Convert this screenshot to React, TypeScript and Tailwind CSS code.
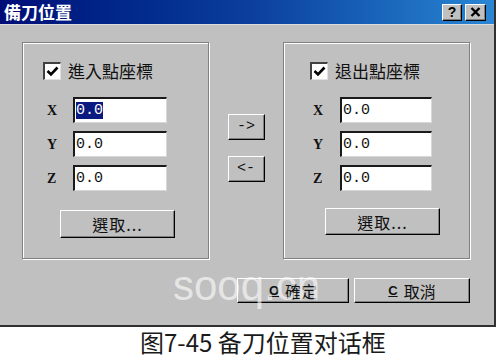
import { ReactNode } from 'react';

const CJK = { fontFamily: '"Noto Sans CJK TC", "Noto Sans", sans-serif' };

function Raised({ className, children }: { className: string; children?: ReactNode }) {
  return (
    <div
      className={`flex items-center justify-center bg-[#c0c0c0] border-t border-l border-t-white border-l-white border-r border-b border-r-black border-b-black shadow-[inset_-1px_-1px_0_#808080] ${className}`}
    >
      {children}
    </div>
  );
}

function CheckBox() {
  return (
    <div className="w-[18px] h-[18px] bg-white border-t-2 border-l-2 border-t-[#404040] border-l-[#404040] border-r border-b border-r-[#e0e0e0] border-b-[#e0e0e0] flex items-center justify-center">
      <svg width="13" height="11" viewBox="0 0 13 11">
        <path d="M1.5 5 L5 8.5 L11.5 1.5" fill="none" stroke="#000" strokeWidth="2.6" />
      </svg>
    </div>
  );
}

function Field({ axis, selected, labelW, inputW }: { axis: string; selected?: boolean; labelW: string; inputW: string }) {
  return (
    <div className="flex items-center h-[26px]">
      <span className={`${labelW} text-[14px] font-bold text-[#111]`} style={{ fontFamily: '"Liberation Serif", serif' }}>
        {axis}
      </span>
      <div
        className={`${inputW} h-[26px] bg-white border-t-2 border-l-2 border-t-[#1a1a1a] border-l-[#1a1a1a] border-r border-b border-r-[#d8d8d8] border-b-[#d8d8d8] flex items-center pl-[1px]`}
      >
        <span
          className={`text-[15px] leading-[17px] ${selected ? 'bg-[#0a1a80] text-white' : 'text-[#111]'}`}
          style={{ fontFamily: '"Liberation Mono", monospace' }}
        >
          0.0
        </span>
      </div>
    </div>
  );
}

function GroupBox({ title, side }: { title: string; side: 'left' | 'right' }) {
  const left = side === 'left';
  return (
    <div className="w-[187px] h-[217px] border border-[#808080] shadow-[inset_1px_1px_0_#fff,1px_1px_0_#fff] flex flex-col">
      <div className={`flex items-center gap-[7px] mt-[19px] ${left ? 'ml-[20px]' : 'ml-[26px]'}`}>
        <CheckBox />
        <span className="text-[17px] leading-[18px] text-[#111]" style={CJK}>
          {title}
        </span>
      </div>
      <div className={`flex flex-col gap-[8px] mt-[17px] ${left ? 'pl-[24px]' : 'pl-[29px]'}`}>
        {['X', 'Y', 'Z'].map((a, i) => (
          <Field
            key={a}
            axis={a}
            selected={left && i === 0}
            labelW={left ? 'w-[26px]' : 'w-[27px]'}
            inputW={left ? 'w-[94px]' : 'w-[92px]'}
          />
        ))}
      </div>
      <Raised className={`w-[115px] ${left ? 'h-[28px] mt-[19px] ml-[37px]' : 'h-[27px] mt-[17px] ml-[41px]'}`}>
        <span className="text-[16px] text-[#111] tracking-[1px]" style={CJK}>
          選取...
        </span>
      </Raised>
    </div>
  );
}

export default function App() {
  return (
    <div className="w-[498px] h-[359px] bg-white relative overflow-hidden">
      <div className="w-[496px] h-[327px] bg-[#c0c0c0] border-r-2 border-b-2 border-r-[#303030] border-b-[#303030] flex flex-col">
        <div className="h-[24px] bg-linear-to-r from-[#000c78] via-[#0c3e9c] to-[#2a86d4] flex items-center justify-between pl-[4px] pr-[8px]">
          <span className="text-white font-bold text-[17px] leading-[20px]" style={CJK}>
            備刀位置
          </span>
          <div className="flex gap-[3px]">
            <Raised className="w-[20px] h-[17px]">
              <span className="text-[14px] font-bold leading-none text-black" style={{ fontFamily: '"Liberation Sans", sans-serif' }}>
                ?
              </span>
            </Raised>
            <Raised className="w-[21px] h-[17px]">
              <svg width="11" height="10" viewBox="0 0 11 10">
                <path d="M1.5 1 L9.5 9 M9.5 1 L1.5 9" stroke="#000" strokeWidth="2.4" />
              </svg>
            </Raised>
          </div>
        </div>
        <div className="h-[1px] bg-[#dcdcdc]" />
        <div className="flex mt-[17px] pl-[22px]">
          <GroupBox title="進入點座標" side="left" />
          <div className="w-[74px] flex flex-col items-center pt-[72px] gap-[16px]">
            <Raised className="w-[37px] h-[26px]">
              <span className="text-[15px] text-[#111]" style={{ fontFamily: '"Liberation Mono", monospace' }}>
                -&gt;
              </span>
            </Raised>
            <Raised className="w-[37px] h-[26px]">
              <span className="text-[15px] text-[#111]" style={{ fontFamily: '"Liberation Mono", monospace' }}>
                &lt;-
              </span>
            </Raised>
          </div>
          <GroupBox title="退出點座標" side="right" />
        </div>
        <div className="flex justify-end gap-[5px] mt-[19px] pr-[24px]">
          <Raised className="w-[112px] h-[25px] gap-[6px]">
            <span className="text-[13px] font-bold underline text-[#111]" style={{ fontFamily: '"Liberation Sans", sans-serif' }}>
              O
            </span>
            <span className="text-[16px] text-[#111]" style={CJK}>
              確定
            </span>
          </Raised>
          <Raised className="w-[116px] h-[25px] gap-[6px]">
            <span className="text-[13px] font-bold underline text-[#111]" style={{ fontFamily: '"Liberation Sans", sans-serif' }}>
              C
            </span>
            <span className="text-[16px] text-[#111]" style={CJK}>
              取消
            </span>
          </Raised>
        </div>
      </div>
      <div
        className="absolute left-[173px] top-[254px] text-[42px] text-white/60 pointer-events-none"
        style={{ fontFamily: '"Liberation Sans", sans-serif' }}
      >
        sooq.cn
      </div>
      <div
        className="pl-[140px] text-[24px] leading-[30px] text-[#1a1a1a]"
        style={{ fontFamily: '"Noto Sans CJK SC", sans-serif' }}
      >
        图7-45 备刀位置对话框
      </div>
    </div>
  );
}
